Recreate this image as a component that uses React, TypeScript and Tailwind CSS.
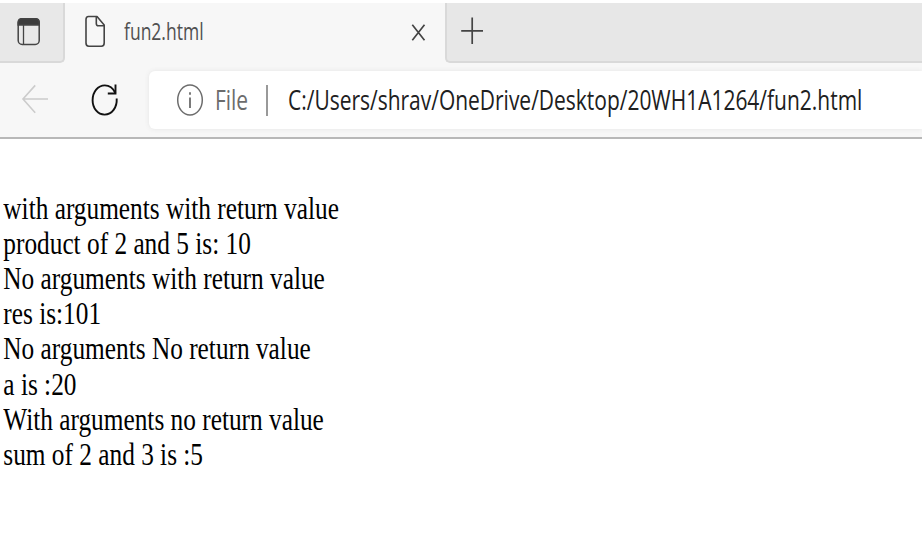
const lines = [
  'with arguments with return value',
  'product of 2 and 5 is: 10',
  'No arguments with return value',
  'res is:101',
  'No arguments No return value',
  'a is :20',
  'With arguments no return value',
  'sum of 2 and 3 is :5',
];

const uiFont = "font-['Open_Sans','Noto_Sans',sans-serif]";

function TabStrip() {
  return (
    <div className="flex h-[60px] bg-[#f7f7f7]">
      <div className="h-[60px] w-[65px] shrink-0 rounded-br-[5px] border-r-2 border-b-2 border-[#d9d9d9] bg-[#e8e8e8] pt-[14px] pl-[16px]">
        <svg width="26" height="30" viewBox="0 0 26 30" fill="none" stroke="#444" strokeWidth="1.5">
          <rect x="2.2" y="1.8" width="21" height="25.6" rx="4" />
          <path d="M2.2 8V5.5Q2.2 1.8 6 1.8H19.4Q23.2 1.8 23.2 5.5V8Z" fill="#3c3c3c" />
          <path d="M7.5 8V27" strokeWidth="1.3" />
        </svg>
      </div>
      <div className="flex w-[380px] shrink-0">
        <svg className="mt-[12px] ml-[19px] shrink-0" width="24" height="34" viewBox="0 0 24 34" fill="none" stroke="#444" strokeWidth="1.6" strokeLinejoin="round">
          <path d="M4.5 1.5H13L20.2 10V28Q20.2 31.2 17.4 31.2H4.8Q2 31.2 2 28V4.5Q2 1.5 4.5 1.5Z" />
          <path d="M12.3 1.5V8.5Q12.3 10.8 14.4 10.8H20.2" />
        </svg>
        <div className="w-[300px] shrink-0 pt-[12px] pl-[15.5px]">
          <span className={`${uiFont} block w-max origin-left scale-x-[0.755] text-[23.2px] leading-[33px] whitespace-nowrap text-[#505050]`}>
            fun2.html
          </span>
        </div>
        <svg className="mt-[20px] shrink-0" width="20" height="20" viewBox="0 0 20 20" fill="none" stroke="#444" strokeWidth="1.7">
          <path d="M4.3 1.8L16.5 17.2M16.5 1.8L4.3 17.2" />
        </svg>
      </div>
      <div className="flex-1 rounded-bl-[5px] border-b-2 border-l-2 border-[#d9d9d9] bg-[#e7e7e7] pt-[13px] pl-[12px]">
        <svg width="26" height="30" viewBox="0 0 26 30" fill="none" stroke="#444" strokeWidth="1.7">
          <path d="M13.2 1.5V28M2.2 14.8H24" />
        </svg>
      </div>
    </div>
  );
}

function Toolbar() {
  return (
    <div className="flex h-[76px] border-b-2 border-[#b8b8b8] bg-[#f7f7f7]">
      <svg className="mt-[20px] ml-[20px] shrink-0" width="30" height="32" viewBox="0 0 30 32" fill="none" stroke="#cccccc" strokeWidth="1.6">
        <path d="M15.2 2.4L3 16L15.2 29.8M3 16H28" />
      </svg>
      <svg className="mt-[19px] ml-[40px] shrink-0" width="30" height="36" viewBox="0 0 30 36" fill="none" stroke="#111" strokeWidth="1.9">
        <path d="M26.7 16.5C27.2 25.5 22 32.6 14.6 32.6C7.8 32.6 2.6 26.2 2.6 18.2C2.6 9.8 8 3.4 14.8 3.4C19.5 3.4 23.2 6.4 25.4 11" />
        <path d="M25.5 2.5V11.5H17.8" />
      </svg>
      <div className="mt-[8px] ml-[29px] flex h-[58px] flex-1 rounded-l-[6px] bg-white shadow-[0_0_5px_#e4e4e4]">
        <svg className="mt-[12px] ml-[27px] shrink-0" width="28" height="36" viewBox="0 0 28 36" fill="none" stroke="#6c6c6c" strokeWidth="1.5">
          <ellipse cx="14" cy="17" rx="12.3" ry="15" />
          <path d="M14 14.5V25M14 9.3V11.7" strokeWidth="1.8" />
        </svg>
        <div className="w-[61px] pt-[11px] pl-[11px]">
          <span className={`${uiFont} block w-max origin-left scale-x-[0.79] text-[26.5px] leading-[36px] whitespace-nowrap text-[#6c6c6c]`}>File</span>
        </div>
        <div className="mt-[14px] ml-[1px] h-[31px] w-[2px] shrink-0 bg-[#999]" />
        <div className="w-0 flex-1 pt-[11px] pl-[20px]">
          <span className={`${uiFont} block w-max origin-left scale-x-[0.791] text-[26.5px] leading-[36px] whitespace-nowrap text-[#202020]`}>
            C:/Users/shrav/OneDrive/Desktop/20WH1A1264/fun2.html
          </span>
        </div>
      </div>
    </div>
  );
}

export default function App() {
  return (
    <div className="h-[556px] w-[922px] overflow-hidden bg-white pt-[3px]">
      <TabStrip />
      <Toolbar />
      <div className="w-max origin-top-left scale-x-[0.83] pt-[52.5px] pl-[4px] font-['Liberation_Serif',serif] text-[30.5px] leading-[35.2px] whitespace-nowrap text-black">
        {lines.map((line) => (
          <p key={line}>{line}</p>
        ))}
      </div>
    </div>
  );
}
